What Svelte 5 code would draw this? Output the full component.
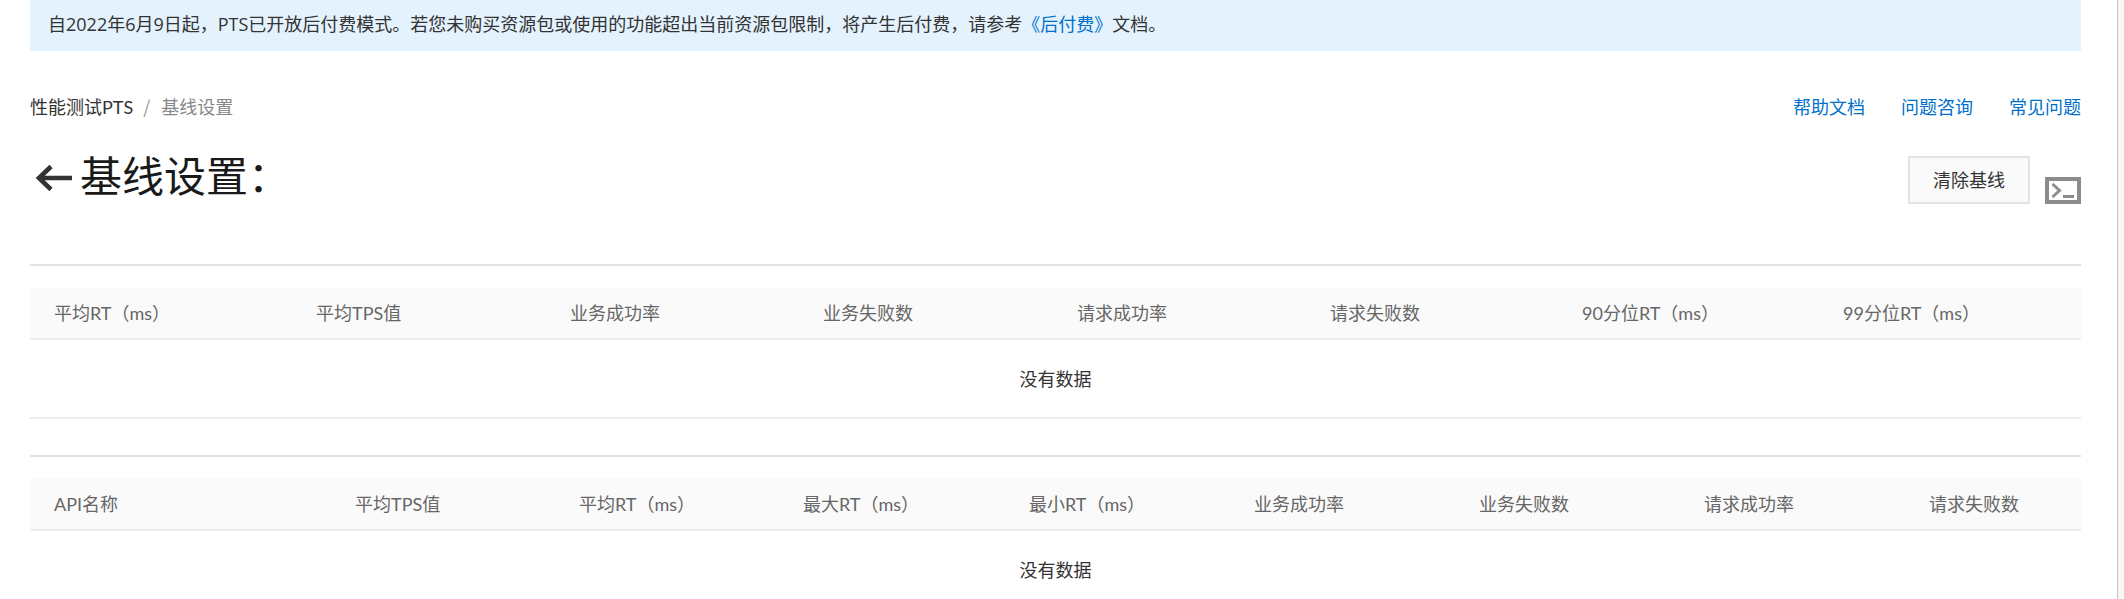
<script>
  const links = ["帮助文档", "问题咨询", "常见问题"];
  const summaryCols = ["平均RT（ms）", "平均TPS值", "业务成功率", "业务失败数", "请求成功率", "请求失败数", "90分位RT（ms）", "99分位RT（ms）"];
  const apiCols = ["API名称", "平均TPS值", "平均RT（ms）", "最大RT（ms）", "最小RT（ms）", "业务成功率", "业务失败数", "请求成功率", "请求失败数"];
</script>

<div class="page">
  <div class="notice">
    自2022年6月9日起，PTS已开放后付费模式。若您未购买资源包或使用的功能超出当前资源包限制，将产生后付费，请参考<a href="#fee">《后付费》</a>文档。
  </div>

  <div class="crumbs-row">
    <div class="crumbs">
      <span>性能测试PTS</span>
      <span class="sep">/</span>
      <span class="current">基线设置</span>
    </div>
    <div class="links">
      {#each links as link}
        <a href="#help">{link}</a>
      {/each}
    </div>
  </div>

  <div class="title-row">
    <h1>
      <svg class="back" width="37" height="28" viewBox="0 0 37 28" fill="none" aria-hidden="true">
        <path d="M37 14H4M16 2.5L4 14L16 25.5" stroke="#333" stroke-width="4.6" />
      </svg>
      <span>基线设置：</span>
    </h1>
    <div class="actions">
      <button>清除基线</button>
      <svg class="term" width="36" height="27" viewBox="0 0 36 27" fill="none" aria-hidden="true">
        <rect x="2" y="2" width="32" height="23" stroke="#8c8c8c" stroke-width="4" />
        <path d="M7.5 7L14.5 13.5L7.5 20" stroke="#8c8c8c" stroke-width="3" />
        <path d="M18 19.5H29" stroke="#8c8c8c" stroke-width="3" />
      </svg>
    </div>
  </div>

  <section class="block">
    <div class="head summary">
      {#each summaryCols as col}
        <div>{col}</div>
      {/each}
    </div>
    <div class="empty">没有数据</div>
  </section>

  <section class="block">
    <div class="head api">
      {#each apiCols as col}
        <div>{col}</div>
      {/each}
    </div>
    <div class="empty">没有数据</div>
  </section>
</div>

<style>
  :global(body) {
    margin: 0;
    background: #f7f7f7;
    overflow: hidden;
  }

  .page {
    box-sizing: border-box;
    width: 2118px;
    height: 599px;
    padding: 0 36px 0 30px;
    background: #fff;
    border-right: 1px solid #c4c4c4;
    overflow: hidden;
    font-family: Lato, "Noto Sans CJK SC", sans-serif;
    font-size: 18px;
    color: #333;
  }

  a {
    color: #0070cc;
    text-decoration: none;
  }

  .notice {
    height: 51px;
    line-height: 49px;
    padding-left: 18px;
    background: #e3f2fd;
    white-space: nowrap;
    font-family: "Open Sans", "Noto Sans CJK SC", sans-serif;
  }

  .crumbs-row {
    display: flex;
    justify-content: space-between;
    align-items: center;
    height: 26px;
    margin-top: 42px;
  }

  .crumbs {
    display: flex;
    align-items: center;
  }

  .sep {
    margin: 0 11px 0 10px;
    font-family: "Noto Sans CJK SC", sans-serif;
    color: #999;
  }

  .current {
    color: #888;
  }

  .links {
    display: flex;
    gap: 36px;
  }

  .title-row {
    display: flex;
    justify-content: space-between;
    align-items: flex-start;
    height: 147px;
    border-bottom: 2px solid #e3e3e3;
    box-sizing: border-box;
    padding-top: 37px;
  }

  h1 {
    display: flex;
    align-items: center;
    margin: 0;
    font-family: "Noto Sans CJK SC", sans-serif;
    font-size: 42px;
    font-weight: 400;
    line-height: 34px;
    color: #1a1a1a;
  }

  .back {
    margin: 8px 8px 0 5px;
  }

  .actions {
    display: flex;
    align-items: flex-end;
    gap: 15px;
  }

  button {
    width: 122px;
    height: 48px;
    padding: 0 0 2px;
    border: 2px solid #e3e3e3;
    background: #fafafa;
    color: #333;
    font: inherit;
  }

  .term {
    display: block;
  }

  .block {
    margin-top: 22px;
  }

  .block + .block {
    border-top: 2px solid #e3e3e3;
    margin-top: 36px;
    padding-top: 22px;
  }

  .head {
    display: grid;
    align-items: center;
    height: 52px;
    padding-bottom: 3px;
    box-sizing: border-box;
    background: #fafafa;
    border-bottom: 2px solid #ededed;
    color: #666;
  }

  .head div {
    padding-left: 24px;
    white-space: nowrap;
  }

  .summary {
    grid-template-columns: 262px 254px 253px 254px 253px 252px 261px 262px;
  }

  .api {
    grid-template-columns: 301px 224px 224px 226px 225px 225px 225px 225px 176px;
  }

  .empty {
    height: 77px;
    line-height: 79px;
    text-align: center;
    border-bottom: 2px solid #ededed;
  }
</style>
